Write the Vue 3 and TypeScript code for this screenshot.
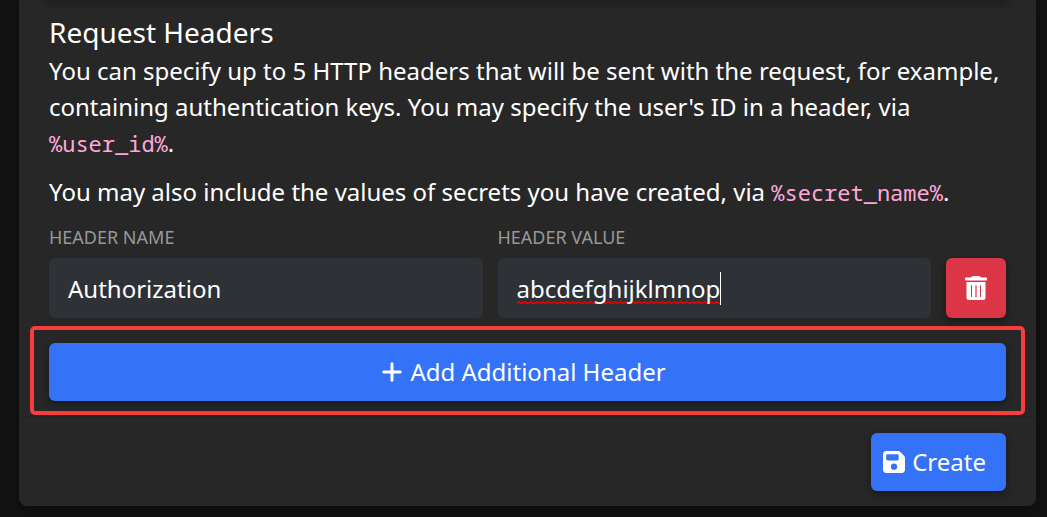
<script setup lang="ts">
import { ref } from 'vue'

const headerName = ref<string>('Authorization')
const headerValue = ref<string>('abcdefghijklmnop')
</script>

<template>
  <main class="page">
    <form class="card" @submit.prevent>
      <div class="body">
        <div class="previous"></div>
        <section>
          <h2>Request Headers</h2>
          <p>
            You can specify up to 5 HTTP headers that will be sent with the request, for example,
            containing authentication keys. You may specify the user's ID in a header, via
            <code>%user_id%</code>.
          </p>
          <p>
            You may also include the values of secrets you have created, via
            <code>%secret_name%</code>.
          </p>
        </section>
        <div class="row">
          <div class="field">
            <label for="header-name">HEADER NAME</label>
            <div class="control">
              <input id="header-name" v-model="headerName" type="text" />
            </div>
          </div>
          <div class="field">
            <label for="header-value">HEADER VALUE</label>
            <div class="control">
              <span class="editing" aria-hidden="true">
                <svg class="wave" width="100%" height="3">
                  <defs>
                    <pattern id="squiggle" width="6" height="3" patternUnits="userSpaceOnUse">
                      <path d="M0 2.2 L1.5 .8 L3 1.6 L4.5 2.2 L6 2.2" fill="none" stroke="#e80000" stroke-width="1.8" />
                    </pattern>
                  </defs>
                  <rect width="100%" height="3" fill="url(#squiggle)" />
                </svg>
              </span>
              <input id="header-value" v-model="headerValue" type="text" />
            </div>
          </div>
          <button class="btn danger" type="button" aria-label="Delete header">
            <svg width="22" height="24" viewBox="0 0 22 24" fill="currentColor">
              <path d="M1.2 1.5H6L7 .5Q7.500 0 8.200 0H13.800Q14.500 0 15 .5L16 1.500H20.800Q22 1.500 22 2.700V3.300Q22 4.600 20.800 4.600H1.200Q0 4.600 0 3.300V2.700Q0 1.500 1.200 1.500Z" />
              <path fill-rule="evenodd" d="M1.500 6H20.500V21.500Q20.500 24 18 24H4Q1.500 24 1.500 21.500ZM6 9.500V20.500Q6 21 6.500 21T7 20.500V9.500Q7 9 6.500 9T6 9.500ZM10.400 9.500V20.500Q10.400 21 11 21T11.600 20.500V9.500Q11.600 9 11 9T10.400 9.500ZM15 9.500V20.500Q15 21 15.500 21T16 20.500V9.500Q16 9 15.500 9T15 9.500Z" />
            </svg>
          </button>
        </div>
        <div class="highlight">
          <button class="btn add" type="button">
            <svg width="22" height="24" viewBox="0 0 448 512" fill="currentColor">
              <path d="M256 80c0-17.7-14.3-32-32-32s-32 14.3-32 32V224H48c-17.7 0-32 14.3-32 32s14.3 32 32 32H192V432c0 17.7 14.3 32 32 32s32-14.3 32-32V288H400c17.7 0 32-14.3 32-32s-14.3-32-32-32H256V80z" />
            </svg>
            Add Additional Header
          </button>
        </div>
      </div>
      <footer>
        <button class="btn create" type="submit">
          <svg width="22" height="22" viewBox="0 32 448 448" fill="currentColor">
            <path d="M64 32C28.7 32 0 60.7 0 96V416c0 35.3 28.7 64 64 64H384c35.3 0 64-28.7 64-64V173.3c0-17-6.7-33.3-18.7-45.3L352 50.7C340 38.7 323.7 32 306.7 32H64zm0 96c0-17.7 14.3-32 32-32H288c17.7 0 32 14.3 32 32v64c0 17.7-14.3 32-32 32H96c-17.7 0-32-14.3-32-32V128zM224 288a64 64 0 1 1 0 128 64 64 0 1 1 0-128z" />
          </svg>
          Create
        </button>
      </footer>
    </form>
  </main>
</template>

<style>
html,
body {
  background: #121212;
}
</style>

<style scoped>
.page {
  padding: 0 11px 11px 19px;
  overflow: hidden;
  color: #fff;
  font: 24px/36px "Noto Sans", sans-serif;
}

.card {
  background: #272727;
  border-radius: 0 0 8px 8px;
  box-shadow: 0 4px 12px rgba(0, 0, 0, 0.35);
}

.body {
  padding: 0 30px;
}

.previous {
  height: 0;
  box-shadow: 0 0 8px 3px rgba(0, 0, 0, 0.4);
}

section {
  padding-top: 15px;
}

h2 {
  margin: 0 0 4px;
  font-size: 28px;
  font-weight: 400;
  line-height: 34px;
}

p {
  margin: 0 0 13px;
}

code {
  color: #ffa8d8;
  font-family: "Noto Sans Mono", "DejaVu Sans Mono", monospace;
  font-size: 22px;
  line-height: 1;
}

.row {
  display: flex;
  align-items: flex-end;
  gap: 15px;
}

.field {
  flex: 1;
  min-width: 0;
}

label {
  display: block;
  margin-bottom: 7px;
  color: #989898;
  font-size: 18px;
  line-height: 28px;
}

.control {
  position: relative;
  border-radius: 6px;
  background: #2e3136;
}

input {
  position: relative;
  display: block;
  box-sizing: border-box;
  width: 100%;
  height: 60px;
  padding: 0 19px;
  border: 0;
  outline: 0;
  background: transparent;
  color: #fff;
  font: inherit;
}

.editing {
  position: absolute;
  top: 14px;
  left: 19px;
  width: 203px;
  height: 33px;
  border-right: 1px solid #fff;
}

.wave {
  position: absolute;
  bottom: 1px;
  left: 0;
}

.btn {
  display: flex;
  align-items: center;
  justify-content: center;
  gap: 7px;
  height: 58px;
  padding: 0;
  border: 0;
  border-radius: 6px;
  background: #3472f7;
  box-shadow: 0 3px 8px rgba(0, 0, 0, 0.4);
  color: #fff;
  font: inherit;
}

.danger {
  width: 60px;
  height: 60px;
  background: #dc3545;
}

.highlight {
  margin: 8px -19px 0;
  padding: 13px 15px 10px;
  border: 4px solid #f93c3c;
  border-radius: 5px;
}

.add {
  width: 100%;
  padding-right: 8px;
}

footer {
  display: flex;
  justify-content: flex-end;
  margin-top: 1px;
  padding: 16px 30px 15px;
  border-top: 1px solid #222;
}

.create {
  padding: 0 20px 0 12px;
}
</style>
